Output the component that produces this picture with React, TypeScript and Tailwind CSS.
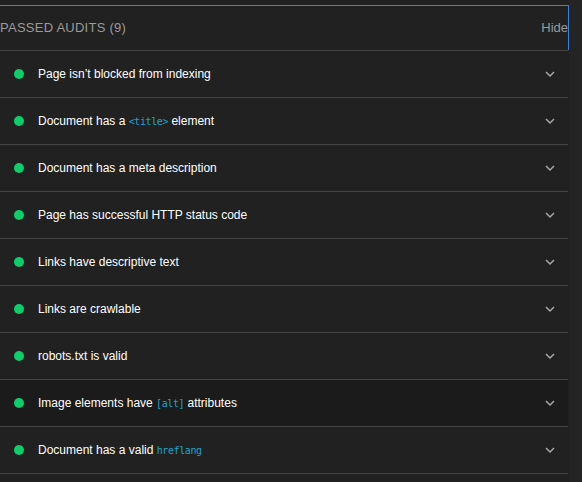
import { ReactNode } from "react";

type Audit = { title: ReactNode; hover?: boolean };

const Code = ({ children }: { children: ReactNode }) => (
  <code className="font-['DejaVu_Sans_Mono',monospace] text-[10px] tracking-[-0.4px] text-[#20a4c6]">{children}</code>
);

const audits: Audit[] = [
  { title: "Page isn’t blocked from indexing" },
  { title: <>Document has a <Code>&lt;title&gt;</Code> element</> },
  { title: "Document has a meta description" },
  { title: "Page has successful HTTP status code" },
  { title: "Links have descriptive text" },
  { title: "Links are crawlable" },
  { title: "robots.txt is valid" },
  { title: <>Image elements have <Code>[alt]</Code> attributes</>, hover: true },
  { title: <>Document has a valid <Code>hreflang</Code></> },
];

function Chevron() {
  return (
    <svg width="12" height="8" viewBox="0 0 12 8" className="text-[#a8a8a8]">
      <path d="M2 2l4 4 4-4" fill="none" stroke="currentColor" strokeWidth="1.5" />
    </svg>
  );
}

export default function App() {
  return (
    <div className="w-[582px] h-[482px] bg-[#212121] overflow-hidden flex font-['Liberation_Sans',Arial,sans-serif]">
      <div className="w-[569px] pt-[5px]">
        <div className="h-[45px] border-t border-r border-[#3b7ee3] flex items-center justify-between">
          <span className="text-[13px] tracking-[0.25px] text-[#9a9a9a]">PASSED AUDITS (9)</span>
          <span className="text-[13px] text-[#9a9a9a]">Hide</span>
        </div>
        <div className="border-t border-[#444] mr-px">
          {audits.map((a, i) => (
            <div
              key={i}
              className={`h-[47px] flex items-center border-b border-[#444] ${a.hover ? "bg-[#1b1b1b]" : ""}`}
            >
              <span className="w-[10px] h-[10px] rounded-full bg-[#0cce6b] ml-[14px]" />
              <span className="ml-[14px] text-[12px] text-white flex-1">{a.title}</span>
              <span className="mr-[12px] flex">
                <Chevron />
              </span>
            </div>
          ))}
        </div>
      </div>
      <div className="flex-1 bg-[#242424]" />
    </div>
  );
}
